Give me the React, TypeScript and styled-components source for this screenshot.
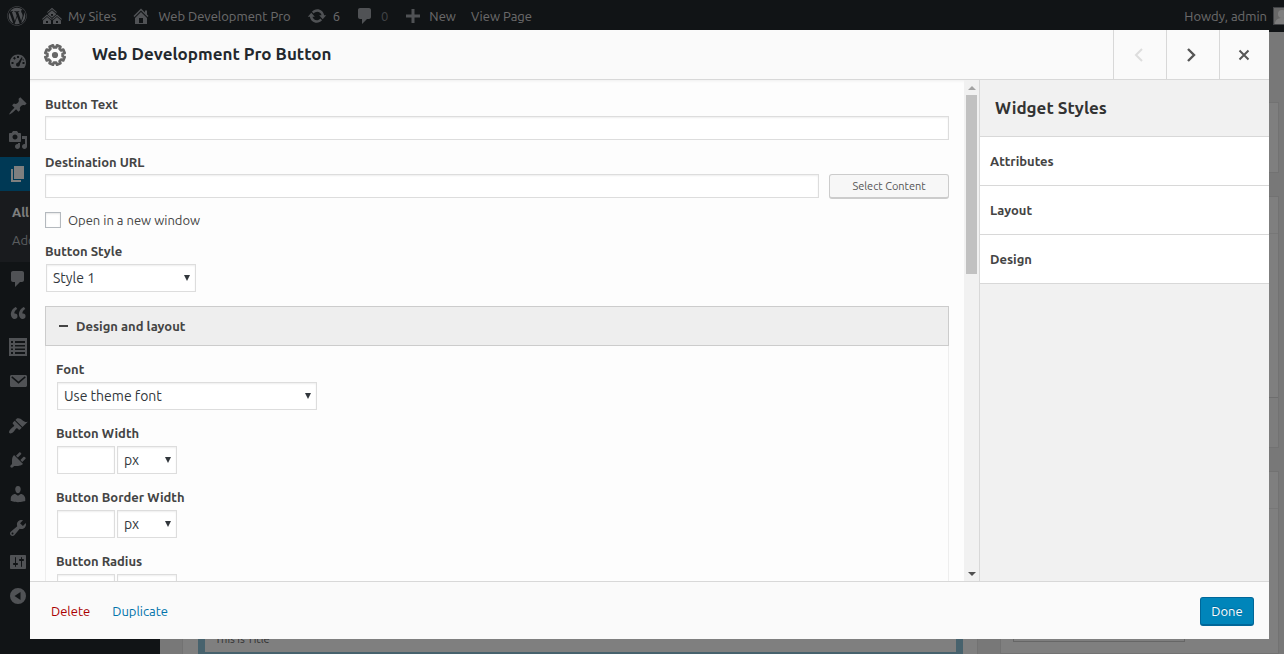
import React from "react";
import styled, { createGlobalStyle } from "styled-components";
import { FaWordpress } from "react-icons/fa";

const GlobalStyle = createGlobalStyle`
  *, *::before, *::after { box-sizing: border-box; }
  body {
    margin: 0;
    background: #f1f1f1;
    color: #444;
    font-family: Ubuntu, "Open Sans", "Noto Sans", sans-serif;
    font-size: 13px;
    line-height: 18px;
  }
  button, input, select { font-family: inherit; margin: 0; }
  h1, h2, ul { margin: 0; padding: 0; }
  ul { list-style: none; }
  a { text-decoration: none; color: inherit; }
`;

/* ---------- Icons ---------- */

const icons = {
  sites:
    "M14.27 6.87L10 3.14 5.73 6.87 5 6.14l5-4.38 5 4.38zM14 8.42l-4.05 3.43L6 8.38v-.74l4-3.5 4 3.5v.78zM11 9.7V8H9v1.7h2zm-1.73 4.03L5 10 .73 13.73 0 13l5-4.38L10 13zm10 0L15 10l-4.27 3.73L10 13l5-4.38L20 13zM5 11l4 3.5V18H1v-3.5zm10 0l4 3.5V18h-8v-3.5zm-9 6v-2H4v2h2zm10 0v-2h-2v2h2z",
  home: "M16 8.5l1.53 1.53-1.06 1.06L10 4.6l-6.47 6.49-1.06-1.06L10 2.5l4 4v-2h2v4zm-6-2.46l6 5.99V18H4v-5.97zM12 17v-5H8v5h4z",
  update:
    "M10.2 3.28c3.53 0 6.43 2.61 6.92 6h2.08l-3.5 4-3.5-4h2.32c-.45-1.97-2.21-3.45-4.32-3.45-1.45 0-2.73.71-3.54 1.78L4.95 5.66C6.23 4.2 8.11 3.28 10.2 3.28zm-.4 13.44c-3.52 0-6.43-2.61-6.92-6H.8l3.5-4c1.17 1.33 2.33 2.67 3.5 4H5.48c.45 1.97 2.21 3.45 4.32 3.45 1.45 0 2.73-.71 3.54-1.78l1.71 1.95c-1.28 1.46-3.15 2.38-5.25 2.38z",
  comment:
    "M5 2h9c1.1 0 2 .9 2 2v7c0 1.1-.9 2-2 2h-2l-5 5v-5H5c-1.1 0-2-.9-2-2V4c0-1.1.9-2 2-2z",
  plus: "M17 8.5v3h-5.500v5.500h-3v-5.500H3v-3h5.500V3h3v5.500z",
  dashboard:
    "M3.800 17h12.400c1.100-1.500 1.800-3.400 1.800-5.500C18 7 14.400 3.500 10 3.500S2 7 2 11.500c0 2.100.7 4 1.800 5.500zM9 5h2v2H9zM5 7.200l1.500-1.400 1.400 1.400-1.400 1.500zM3.500 11h2v2h-2zM14.500 11h2v2h-2zM13.600 6.200l1 .6-2.700 6.200c.3 1.500-.7 2.600-1.900 2.600s-2.200-1.200-1.900-2.400c.2-1 1-1.600 2-1.700zM15 8l1 1-.7.700-1-1z",
  pin: "M10.44 3.02l1.82-1.82 6.36 6.35-1.83 1.82c-1.05-.68-2.48-.57-3.41.36l-.75.75c-.92.93-1.04 2.35-.35 3.41l-1.83 1.82-2.41-2.41-2.8 2.79c-.42.42-3.38 2.71-3.8 2.29s1.86-3.39 2.28-3.81l2.79-2.79L4.1 9.36l1.83-1.82c1.05.69 2.48.57 3.4-.36l.75-.75c.93-.92 1.05-2.35.36-3.41z",
  media:
    "M13 11V4c0-.55-.45-1-1-1h-1.67L9 1H5L3.67 3H2c-.55 0-1 .45-1 1v7c0 .55.45 1 1 1h10c.55 0 1-.45 1-1zM7 4.5c1.38 0 2.5 1.12 2.5 2.5S8.38 9.5 7 9.5 4.5 8.38 4.5 7 5.62 4.5 7 4.5zM14 6h5v10.5c0 1.38-1.12 2.5-2.5 2.5S14 17.88 14 16.5s1.12-2.5 2.5-2.5c.17 0 .34.02.5.05V9h-3V6zm-4 8.05V13h2v3.5c0 1.38-1.12 2.5-2.5 2.5S7 17.88 7 16.5 8.12 14 9.5 14c.17 0 .34.02.5.05z",
  page: "M6 15V2h10v13H6zm-1 1h8v2H3V5h2v11z",
  quote:
    "M9.49 13.22c0-.74-.2-1.38-.61-1.9-.62-.78-1.83-.88-2.53-.72-.29-1.65 1.11-3.75 2.92-4.65L7.88 4c-2.73 1.3-5.42 4.28-4.96 8.05C3.21 14.43 4.59 16 6.54 16c.85 0 1.56-.25 2.12-.75s.83-1.18.83-2.03zm8.05 0c0-.74-.2-1.38-.61-1.9-.63-.78-1.83-.88-2.53-.72-.29-1.65 1.11-3.75 2.92-4.65L15.93 4c-2.73 1.3-5.41 4.28-4.95 8.05.29 2.38 1.66 3.95 3.61 3.95.85 0 1.56-.25 2.12-.75s.83-1.18.83-2.03z",
  list: "M1 1h18v18H1zM3 4v2h2V4zM7 4v2h10V4zM3 8v1.500h2V8zM7 8v1.500h10V8zM3 11.500V13h2v-1.500zM7 11.500V13h10v-1.500zM3 15v2h2v-2zM7 15v2h10v-2z",
  mail: "M3.500 4h14c.8 0 1.500.7 1.500 1.500v9c0 .8-.7 1.500-1.500 1.500h-14c-.8 0-1.500-.7-1.500-1.500v-9C2 4.700 2.700 4 3.500 4zM4.200 5.200L3.300 6.400l7.200 6.400 7.200-6.400-.9-1.200-6.300 5.200z",
  brush:
    "M14.48 11.06L7.41 3.99l1.5-1.5c.5-.56 2.3-.47 3.51.32 1.21.8 1.43 1.28 2.91 2.1 1.18.64 2.45 1.26 4.45.85zm-.71.71L6.7 4.7 4.93 6.47c-.39.39-.39 1.02 0 1.41l1.06 1.06c.39.39.39 1.03 0 1.42-.6.6-1.43 1.11-2.21 1.69-.35.26-.7.53-1.01.84C1.43 14.23.4 16.08 1.4 17.07c.99 1 2.84-.03 4.18-1.36.31-.31.58-.66.85-1.02.57-.78 1.08-1.61 1.69-2.21.39-.39 1.02-.39 1.41 0l1.06 1.06c.39.39 1.02.39 1.41 0z",
  plug: "M13.11 4.36L9.87 7.6 8 5.73l3.24-3.24c.35-.34 1.05-.2 1.56.32.52.51.66 1.21.31 1.55zm-8 1.77l.91-1.12 9.01 9.01-1.19.84c-.71.71-2.63 1.16-3.82 1.16H6.14L4.9 17.26c-.59.59-1.54.59-2.12 0-.59-.58-.59-1.53 0-2.12l1.24-1.24v-3.88c0-1.13.4-3.19 1.09-3.89zm7.26 3.97l3.24-3.24c.34-.35 1.04-.21 1.55.31.52.51.66 1.21.31 1.55l-3.24 3.25z",
  user: "M10 9.25c-2.27 0-2.73-3.44-2.73-3.44C7 4.02 7.82 2 9.97 2c2.16 0 2.98 2.02 2.71 3.81 0 0-.41 3.44-2.68 3.44zm0 2.57L12.72 10c2.39 0 4.52 2.33 4.52 4.53v2.49s-3.65 1.13-7.24 1.13c-3.65 0-7.24-1.13-7.24-1.13v-2.49c0-2.25 1.94-4.48 4.47-4.48z",
  wrench:
    "M16.68 9.77c-1.34 1.34-3.3 1.67-4.95.99l-5.41 6.52c-.99.99-2.59.99-3.58 0s-.99-2.59 0-3.57l6.52-5.42c-.68-1.65-.35-3.61.99-4.95 1.28-1.28 3.12-1.62 4.72-1.06l-2.89 2.89 2.82 2.82 2.86-2.87c.53 1.58.18 3.39-1.08 4.65zM3.81 16.21c.4.39 1.04.39 1.43 0 .4-.4.4-1.04 0-1.43-.39-.4-1.03-.4-1.43 0-.39.39-.39 1.03 0 1.43z",
  sliders:
    "M18 16V4c0-.55-.45-1-1-1H3c-.55 0-1 .45-1 1v12c0 .55.45 1 1 1h14c.55 0 1-.45 1-1zM8 11h1c.55 0 1 .45 1 1s-.45 1-1 1H8v1.5c0 .28-.22.5-.5.5s-.5-.22-.5-.5V13H6c-.55 0-1-.45-1-1s.45-1 1-1h1V5.5c0-.28.22-.5.5-.5s.5.22.5.5V11zm5-2h-1c-.55 0-1-.45-1-1s.45-1 1-1h1V5.5c0-.28.22-.5.5-.5s.5.22.5.5V7h1c.55 0 1 .45 1 1s-.45 1-1 1h-1v5.5c0 .28-.22.5-.5.5s-.5-.22-.5-.5V9z",
  collapse: "M10 2a8 8 0 1 0 0 16 8 8 0 1 0 0-16zM12.500 6v8L6.500 10z",
};

type IconName = keyof typeof icons;

const Icon = ({ name }: { name: IconName }) => (
  <svg width="20" height="20" viewBox="0 0 20 20" fill="currentColor" fillRule="evenodd" aria-hidden="true">
    <path d={icons[name]} />
  </svg>
);

const gearPath = (() => {
  const points: string[] = [];
  const teeth = 8;
  for (let i = 0; i < teeth; i++) {
    const mid = ((i + 0.5) * 2 * Math.PI) / teeth;
    [
      [-0.24, 7.7],
      [-0.19, 9.9],
      [0.19, 9.9],
      [0.24, 7.7],
    ].forEach(([da, r]) => {
      points.push(`${(12 + r * Math.cos(mid + da)).toFixed(2)} ${(12 + r * Math.sin(mid + da)).toFixed(2)}`);
    });
  }
  return `M${points.join("L")}Z`;
})();

const Gear = () => (
  <svg width="24" height="24" viewBox="0 0 24 24" aria-hidden="true">
    <path d={gearPath} fill="none" stroke="#666" strokeWidth="2.7" strokeLinejoin="round" />
    <circle cx="12" cy="12" r="3.1" fill="#666" />
  </svg>
);

/* ---------- Admin screen behind the dialog ---------- */

const Screen = styled.div`
  display: flex;
  flex-direction: column;
  height: 100vh;
  overflow: hidden;
`;

const AdminBar = styled.header`
  display: flex;
  align-items: center;
  flex: none;
  height: 32px;
  padding-left: 7px;
  gap: 15px;
  background: #23282d;
  color: #eee;
  white-space: nowrap;
  overflow: hidden;
`;

const BarLink = styled.a<{ $muted?: boolean }>`
  display: flex;
  align-items: center;
  gap: 6px;
  color: ${(p) => (p.$muted ? "#82878c" : "#d5d5d5")};
  svg { color: #a0a5aa; flex: none; }
`;

const SiteLink = styled(BarLink)`
  margin-right: 1px;
  gap: 7px;
`;

const Account = styled(BarLink)`
  margin-left: auto;
  margin-right: -7px;
`;

const Avatar = styled.span`
  display: block;
  width: 18px;
  height: 18px;
  border: 1px solid #82878c;
  background: #d0d0d0;
  overflow: hidden;
`;

const AdminBody = styled.div`
  display: flex;
  flex: 1;
  min-height: 0;
`;

const Menu = styled.nav`
  flex: none;
  width: 160px;
  padding-top: 12px;
  background: #23282d;
  color: #a0a5aa;
`;

const MenuItem = styled.a<{ $active?: boolean; $spaced?: boolean }>`
  display: flex;
  align-items: center;
  height: 34px;
  margin-top: ${(p) => (p.$spaced ? 11 : 0)}px;
  padding-left: 8px;
  background: ${(p) => (p.$active ? "#0073aa" : "none")};
  color: ${(p) => (p.$active ? "#fff" : "#a0a5aa")};
`;

const SubMenu = styled.ul`
  padding: 7px 12px 8px;
  background: #32373c;
  line-height: 28px;
`;

const SubMenuItem = styled.li<{ $current?: boolean }>`
  font-weight: ${(p) => (p.$current ? 700 : 400)};
  color: ${(p) => (p.$current ? "#fff" : "#b4b9be")};
`;

const Main = styled.main`
  display: flex;
  flex: 1;
  gap: 22px;
  padding: 70px 5px 0 22px;
`;

const Editor = styled.section`
  display: flex;
  flex-direction: column;
  justify-content: flex-end;
  flex: 1;
  padding: 0 14px 0 15px;
  background: #fff;
  border: 1px solid #e5e5e5;
  border-bottom: 0;
`;

const SelectedWidget = styled.div`
  padding: 0 10px 3px;
  border: solid #8fc4da;
  border-width: 0 7px 2px;
  background: #fff;
  color: #666;
  font-size: 11px;
  line-height: 20px;
`;

const MetaColumn = styled.aside`
  display: flex;
  flex-direction: column;
  width: 279px;
`;

const MetaBox = styled.div<{ $height?: number }>`
  display: flex;
  flex-direction: column;
  ${(p) => (p.$height ? `height: ${p.$height}px; margin-bottom: 23px;` : "flex: 1;")}
  padding-top: 36px;
  background: #fff;
  border: 1px solid #e5e5e5;
`;

const MetaBody = styled.div`
  display: flex;
  flex: 1;
  flex-direction: column;
  justify-content: flex-end;
  padding: 0 12px 11px;
  border-top: 1px solid #eee;
`;

const MetaFooter = styled.div`
  height: 50px;
  border-top: 1px solid #ddd;
  background: #fafafa;
`;

const MetaInput = styled.input`
  width: 172px;
  height: 28px;
  border: 1px solid #ccc;
`;

/* ---------- Dialog ---------- */

const Overlay = styled.div`
  position: fixed;
  inset: 0;
  background: rgba(0, 0, 0, 0.5);
`;

const Dialog = styled.div`
  position: fixed;
  inset: 30px 15px 15px 30px;
  display: flex;
  flex-direction: column;
  background: #fafafa;
`;

const TitleBar = styled.div`
  display: flex;
  align-items: stretch;
  flex: none;
  height: 50px;
  border-bottom: 1px solid #d8d8d8;
`;

const TitleIcon = styled.span`
  display: flex;
  align-items: center;
  padding: 0 25px 0 13px;
`;

const Title = styled.h1`
  flex: 1;
  padding-top: 12px;
  color: #23282d;
  font-size: 17px;
  line-height: 24px;
  font-weight: 700;
`;

const BarButton = styled.button`
  display: flex;
  align-items: center;
  justify-content: center;
  width: 53px;
  padding: 0 2px 0 0;
  border: 0;
  border-left: 1px solid #d8d8d8;
  background: none;
  color: #555;
  &:last-child { width: 50px; }
  &:disabled { color: #ddd; }
`;

const DialogBody = styled.div`
  display: flex;
  flex: 1;
  min-height: 0;
`;

const FormScroll = styled.form`
  flex: 1;
  min-width: 0;
  padding: 15px;
  overflow-y: auto;
  scrollbar-width: none;
  background: #fdfdfd;
  box-shadow: inset 0 3px 3px -2px rgba(0, 0, 0, 0.06);
`;

const ScrollTrack = styled.div`
  display: flex;
  flex-direction: column;
  align-items: center;
  flex: none;
  width: 15px;
  background: #f1f1f1;
`;

const ScrollArrow = styled.span<{ $down?: boolean }>`
  display: flex;
  align-items: center;
  justify-content: center;
  height: 15px;
  margin-top: ${(p) => (p.$down ? "auto" : 0)};
  color: ${(p) => (p.$down ? "#505050" : "#a3a3a3")};
`;

const ScrollThumb = styled.span`
  width: 11px;
  height: 179px;
  background: #c1c1c1;
`;

const Field = styled.div<{ $gap?: number; $after?: number }>`
  display: flex;
  flex-direction: column;
  align-items: flex-start;
  gap: ${(p) => p.$gap ?? 3}px;
  margin-bottom: ${(p) => p.$after ?? 13}px;
`;

const Label = styled.label`
  font-weight: 700;
`;

const TextInput = styled.input`
  flex: 1;
  width: 100%;
  min-height: 24px;
  height: 24px;
  padding: 2px 5px;
  border: 1px solid #ddd;
  background: #fff;
  box-shadow: inset 0 1px 2px rgba(0, 0, 0, 0.07);
`;

const UrlRow = styled.div`
  display: flex;
  gap: 10px;
  width: 100%;
  height: 24px;
`;

const SelectContent = styled.button`
  flex: none;
  width: 120px;
  height: 25px;
  padding: 0;
  border: 1px solid #ccc;
  border-radius: 3px;
  border-bottom-width: 2px;
  background: #f7f7f7;
  color: #555;
  font-size: 11px;
`;

const CheckRow = styled.div`
  display: flex;
  align-items: center;
  gap: 7px;
  margin-bottom: 13px;
`;

const Checkbox = styled.input`
  appearance: none;
  width: 16px;
  height: 16px;
  border: 1px solid #b4b9be;
  background: #fff;
  box-shadow: inset 0 1px 2px rgba(0, 0, 0, 0.1);
`;

const SelectBox = styled.span<{ $width: number }>`
  display: grid;
  align-items: center;
  width: ${(p) => p.$width}px;
  margin-left: 1px;
  > * { grid-area: 1 / 1; }
  > svg { justify-self: end; margin-right: 5px; pointer-events: none; }
`;

const NativeSelect = styled.select`
  appearance: none;
  width: 100%;
  height: 28px;
  padding: 0 16px 0 6px;
  border: 1px solid #ddd;
  border-radius: 0;
  background: #fff;
  box-shadow: inset 0 1px 2px rgba(0, 0, 0, 0.07);
  color: #32373c;
  font-size: 14px;
`;

const SectionToggle = styled.button`
  display: flex;
  align-items: center;
  gap: 8px;
  width: 100%;
  height: 40px;
  padding: 0 13px;
  border: 1px solid #ccc;
  background: #eee;
  color: #444;
  font-size: 13px;
  font-weight: 700;
`;

const SectionBody = styled.div`
  padding: 14px 10px;
  border: 1px solid #eee;
  border-top: 0;
`;

const Measure = styled.div`
  display: flex;
  gap: 1px;
  padding-left: 1px;
`;

const MeasureInput = styled(TextInput)`
  flex: none;
  width: 58px;
  height: 28px;
`;

const StylesPanel = styled.aside`
  flex: none;
  width: 290px;
  border-left: 1px solid #d8d8d8;
  background: #f1f1f1;
`;

const StylesHeading = styled.h2`
  padding: 16px 15px;
  border-bottom: 1px solid #d8d8d8;
  color: #333;
  font-size: 17px;
  line-height: 24px;
`;

const StylesButton = styled.button`
  display: block;
  width: 100%;
  height: 49px;
  padding: 0 10px;
  border: 0;
  border-bottom: 1px solid #d8d8d8;
  background: #fff;
  color: #444;
  font-size: 13px;
  font-weight: 700;
  text-align: left;
`;

const Toolbar = styled.footer`
  display: flex;
  align-items: center;
  flex: none;
  gap: 22px;
  height: 58px;
  padding: 1px 15px 0 21px;
  border-top: 1px solid #d8d8d8;
`;

const ActionLink = styled.a<{ $danger?: boolean }>`
  color: ${(p) => (p.$danger ? "#a00" : "#0073aa")};
`;

const DoneButton = styled.button`
  width: 54px;
  height: 29px;
  margin-left: auto;
  padding: 0;
  border: 1px solid #006799;
  border-bottom-width: 2px;
  border-radius: 3px;
  background: #0085ba;
  color: #fff;
  font-size: 13px;
  text-shadow: 0 -1px 1px #006799;
`;

const Select = ({ id, width, value, label }: { id: string; width: number; value: string; label?: string }) => (
  <SelectBox $width={width}>
    <NativeSelect id={id} aria-label={label}>
      <option>{value}</option>
    </NativeSelect>
    <svg width="8" height="8" viewBox="0 0 8 8" fill="#32373c" aria-hidden="true">
      <path d="M1 1h6L4 7z" />
    </svg>
  </SelectBox>
);

const MeasureField = ({ id, label }: { id: string; label: string }) => (
  <Field $gap={4} $after={14}>
    <Label htmlFor={id}>{label}</Label>
    <Measure>
      <MeasureInput id={id} type="text" />
      <Select id={`${id}-unit`} width={60} value="px" label={`${label} unit`} />
    </Measure>
  </Field>
);

const menuTop: { icon: IconName; spaced?: boolean }[] = [
  { icon: "dashboard" },
  { icon: "pin", spaced: true },
  { icon: "media" },
];

const menuBottom: { icon: IconName; spaced?: boolean }[] = [
  { icon: "comment" },
  { icon: "quote" },
  { icon: "list" },
  { icon: "mail" },
  { icon: "brush", spaced: true },
  { icon: "plug" },
  { icon: "user" },
  { icon: "wrench" },
  { icon: "sliders" },
  { icon: "collapse" },
];

export default function App() {
  return (
    <>
      <GlobalStyle />
      <Screen>
        <AdminBar>
          <BarLink href="#"><FaWordpress size={20} /></BarLink>
          <BarLink href="#"><Icon name="sites" />My Sites</BarLink>
          <SiteLink href="#"><Icon name="home" />Web Development Pro</SiteLink>
          <BarLink href="#"><Icon name="update" />6</BarLink>
          <BarLink href="#" $muted><Icon name="comment" />0</BarLink>
          <BarLink href="#"><Icon name="plus" />New</BarLink>
          <BarLink href="#">View Page</BarLink>
          <Account href="#">
            Howdy, admin
            <Avatar>
              <svg width="16" height="16" viewBox="0 0 16 16" fill="#fff" aria-hidden="true">
                <circle cx="8" cy="6" r="4" />
                <path d="M1 16c0-4 3-6 7-6s7 2 7 6z" />
              </svg>
            </Avatar>
          </Account>
        </AdminBar>
        <AdminBody>
          <Menu>
            {menuTop.map((m) => (
              <MenuItem key={m.icon} href="#" $spaced={m.spaced}><Icon name={m.icon} /></MenuItem>
            ))}
            <MenuItem href="#" $active><Icon name="page" /></MenuItem>
            <SubMenu>
              <SubMenuItem $current>All Pages</SubMenuItem>
              <SubMenuItem>Add New</SubMenuItem>
            </SubMenu>
            {menuBottom.map((m) => (
              <MenuItem key={m.icon} href="#" $spaced={m.spaced}><Icon name={m.icon} /></MenuItem>
            ))}
          </Menu>
          <Main>
            <Editor>
              <SelectedWidget>This is Title</SelectedWidget>
            </Editor>
            <MetaColumn>
              <MetaBox $height={71} />
              <MetaBox $height={252}>
                <MetaBody />
                <MetaFooter />
              </MetaBox>
              <MetaBox>
                <MetaBody><MetaInput aria-label="Order" /></MetaBody>
              </MetaBox>
            </MetaColumn>
          </Main>
        </AdminBody>
      </Screen>

      <Overlay />
      <Dialog role="dialog" aria-labelledby="dialog-title">
        <TitleBar>
          <TitleIcon><Gear /></TitleIcon>
          <Title id="dialog-title">Web Development Pro Button</Title>
          <BarButton type="button" aria-label="Previous" disabled>
            <svg width="14" height="14" viewBox="0 0 14 14" fill="none" stroke="currentColor" strokeWidth="2"><path d="M10 1L4 7l6 6" /></svg>
          </BarButton>
          <BarButton type="button" aria-label="Next">
            <svg width="14" height="14" viewBox="0 0 14 14" fill="none" stroke="currentColor" strokeWidth="2.4"><path d="M3 1l6 6-6 6" /></svg>
          </BarButton>
          <BarButton type="button" aria-label="Close">
            <svg width="14" height="14" viewBox="0 0 14 14" fill="none" stroke="currentColor" strokeWidth="2"><path d="M2.500 2.500l9 9M11.500 2.500l-9 9" /></svg>
          </BarButton>
        </TitleBar>
        <DialogBody>
          <FormScroll>
            <Field>
              <Label htmlFor="text">Button Text</Label>
              <TextInput id="text" type="text" />
            </Field>
            <Field>
              <Label htmlFor="url">Destination URL</Label>
              <UrlRow>
                <TextInput id="url" type="text" />
                <SelectContent type="button">Select Content</SelectContent>
              </UrlRow>
            </Field>
            <CheckRow>
              <Checkbox id="new-window" type="checkbox" />
              <label htmlFor="new-window">Open in a new window</label>
            </CheckRow>
            <Field $gap={4} $after={14}>
              <Label htmlFor="style">Button Style</Label>
              <Select id="style" width={150} value="Style 1" />
            </Field>
            <SectionToggle type="button" aria-expanded="true">
              <svg width="9" height="10" viewBox="0 0 9 10" aria-hidden="true"><path d="M0 4h9v2H0z" fill="#444" /></svg>
              Design and layout
            </SectionToggle>
            <SectionBody>
              <Field $gap={4} $after={14}>
                <Label htmlFor="font">Font</Label>
                <Select id="font" width={260} value="Use theme font" />
              </Field>
              <MeasureField id="width" label="Button Width" />
              <MeasureField id="border-width" label="Button Border Width" />
              <MeasureField id="radius" label="Button Radius" />
            </SectionBody>
          </FormScroll>
          <ScrollTrack aria-hidden="true">
            <ScrollArrow>
              <svg width="8" height="4" viewBox="0 0 8 4" fill="currentColor"><path d="M0 4l4-4 4 4z" /></svg>
            </ScrollArrow>
            <ScrollThumb />
            <ScrollArrow $down>
              <svg width="8" height="4" viewBox="0 0 8 4" fill="currentColor"><path d="M0 0l4 4 4-4z" /></svg>
            </ScrollArrow>
          </ScrollTrack>
          <StylesPanel>
            <StylesHeading>Widget Styles</StylesHeading>
            <StylesButton type="button">Attributes</StylesButton>
            <StylesButton type="button">Layout</StylesButton>
            <StylesButton type="button">Design</StylesButton>
          </StylesPanel>
        </DialogBody>
        <Toolbar>
          <ActionLink href="#" $danger>Delete</ActionLink>
          <ActionLink href="#">Duplicate</ActionLink>
          <DoneButton type="button">Done</DoneButton>
        </Toolbar>
      </Dialog>
    </>
  );
}
